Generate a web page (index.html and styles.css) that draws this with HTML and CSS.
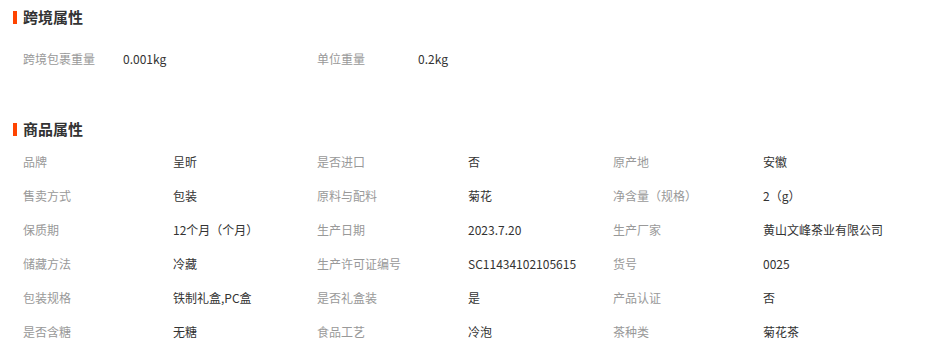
FILE: index.html
```html
<!DOCTYPE html>
<html lang="zh-CN">
<head>
<meta charset="utf-8">
<title>属性</title>
<link rel="stylesheet" href="styles.css">
</head>
<body>
<section class="section section-cross">
  <h2 class="title">跨境属性</h2>
  <div class="grid grid-cross">
    <span class="label">跨境包裹重量</span><span class="value">0.001kg</span>
    <span class="label">单位重量</span><span class="value">0.2kg</span>
  </div>
</section>
<section class="section section-goods">
  <h2 class="title">商品属性</h2>
  <div class="grid grid-goods">
    <span class="label">品牌</span><span class="value">呈昕</span>
    <span class="label">是否进口</span><span class="value">否</span>
    <span class="label">原产地</span><span class="value">安徽</span>

    <span class="label">售卖方式</span><span class="value">包装</span>
    <span class="label">原料与配料</span><span class="value">菊花</span>
    <span class="label">净含量（规格）</span><span class="value">2（g）</span>

    <span class="label">保质期</span><span class="value">12个月（个月）</span>
    <span class="label">生产日期</span><span class="value">2023.7.20</span>
    <span class="label">生产厂家</span><span class="value">黄山文峰茶业有限公司</span>

    <span class="label">储藏方法</span><span class="value">冷藏</span>
    <span class="label">生产许可证编号</span><span class="value">SC11434102105615</span>
    <span class="label">货号</span><span class="value">0025</span>

    <span class="label">包装规格</span><span class="value">铁制礼盒,PC盒</span>
    <span class="label">是否礼盒装</span><span class="value">是</span>
    <span class="label">产品认证</span><span class="value">否</span>

    <span class="label">是否含糖</span><span class="value">无糖</span>
    <span class="label">食品工艺</span><span class="value">冷泡</span>
    <span class="label">茶种类</span><span class="value">菊花茶</span>
  </div>
</section>
</body>
</html>
```
FILE: styles.css
```css
* { box-sizing: border-box; }
html, body {
  margin: 0;
  padding: 0;
  background: #fff;
}
body {
  font-family: "Noto Sans CJK SC", "Liberation Sans", sans-serif;
  font-size: 12px;
  color: #333;
  width: 938px;
  height: 363px;
  overflow: hidden;
}
.section {
  padding-left: 13px;
}
.title {
  display: flex;
  align-items: center;
  gap: 6px;
  margin: 0;
  height: 20px;
  font-size: 15px;
  font-weight: bold;
  color: #333;
  line-height: 20px;
}
.title::before {
  content: "";
  display: block;
  width: 4px;
  height: 13px;
  background: #ff4400;
}
.section-cross .title { margin-top: 7px; }
.section-goods .title { margin-top: 43px; }
.grid {
  display: grid;
  padding-left: 10px;
  grid-auto-rows: 34px;
  align-items: center;
}
.grid-cross {
  margin-top: 15px;
  grid-template-columns: 100px 194px 101px 1fr;
}
.grid-goods {
  margin-top: 6px;
  grid-template-columns: 150px 144px 151px 145px 150px 1fr;
}
.label {
  color: #999;
  white-space: nowrap;
  line-height: 34px;
}
.value {
  color: #333;
  white-space: nowrap;
  line-height: 34px;
}
```
